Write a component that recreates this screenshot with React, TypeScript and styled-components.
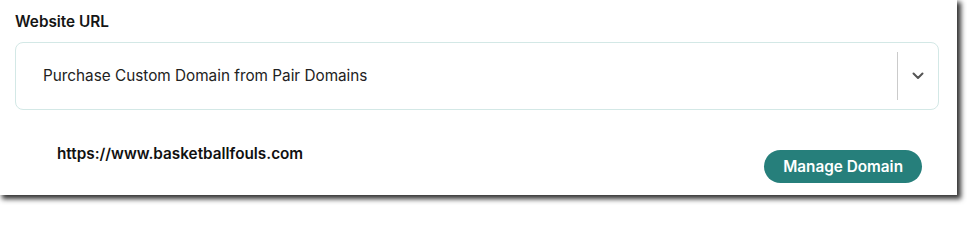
import styled, { createGlobalStyle } from 'styled-components';

const GlobalStyle = createGlobalStyle`
  html, body {
    margin: 0;
    padding: 0;
    background: #ffffff;
  }
  body {
    min-height: 205px;
    font-family: Inter, "Noto Sans", Arial, sans-serif;
    color: #1b1b1b;
  }
`

const Page = styled.main`
  padding-bottom: 10px;
`

const Card = styled.section`
  box-sizing: border-box;
  width: 957px;
  height: 195px;
  padding: 12px 18px 0 15px;
  background: #ffffff;
  box-shadow: 3px 3px 5px 1px rgba(0, 0, 0, 0.8);
`

const Label = styled.div`
  font-size: 15.3px;
  line-height: 20px;
  font-weight: 600;
  color: #151515;
`

const Select = styled.div`
  box-sizing: border-box;
  margin-top: 10px;
  height: 68px;
  display: flex;
  align-items: center;
  border: 1px solid #d3e8e6;
  border-radius: 8px;
`

const SelectValue = styled.div`
  flex: 1;
  padding-left: 27px;
  font-size: 15.3px;
  line-height: 20px;
  color: #222222;
`

const Divider = styled.span`
  width: 1px;
  height: 48px;
  background: #cbcbcb;
`

const Indicator = styled.div`
  width: 40px;
  display: flex;
  align-items: center;
  justify-content: center;
  color: #555555;
`

const Footer = styled.div`
  display: flex;
  align-items: flex-start;
  justify-content: space-between;
`

const Url = styled.div`
  margin-top: 34px;
  padding-left: 42px;
  font-size: 15.3px;
  line-height: 20px;
  font-weight: 600;
  color: #111111;
`

const Button = styled.button`
  margin-top: 40px;
  margin-right: 17px;
  height: 33px;
  padding: 0 19px;
  border: none;
  border-radius: 17px;
  background: #267f7b;
  color: #ffffff;
  font-family: inherit;
  font-size: 15.3px;
  font-weight: 600;
  cursor: pointer;
`

export default function App() {
  return (
    <Page>
      <GlobalStyle />
      <Card>
        <Label>Website URL</Label>
        <Select>
          <SelectValue>Purchase Custom Domain from Pair Domains</SelectValue>
          <Divider />
          <Indicator>
            <svg width="12" height="8" viewBox="0 0 12 8" fill="none">
              <path d="M1.5 1.5 6 6l4.5-4.5" stroke="currentColor" strokeWidth="2" strokeLinecap="round" strokeLinejoin="round" />
            </svg>
          </Indicator>
        </Select>
        <Footer>
          <Url>https://www.basketballfouls.com</Url>
          <Button>Manage Domain</Button>
        </Footer>
      </Card>
    </Page>
  )
}
